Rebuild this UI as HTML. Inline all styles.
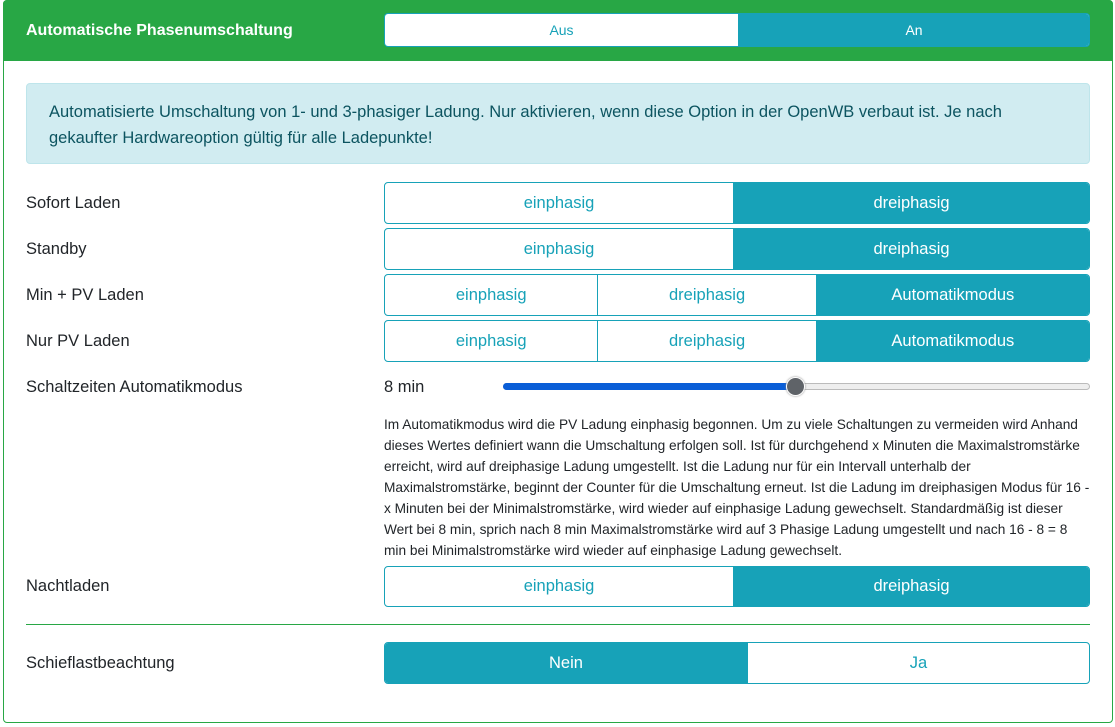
<!DOCTYPE html>
<html><head><meta charset="utf-8"><style>
*{box-sizing:border-box;margin:0;padding:0}
body{width:1115px;height:727px;background:#fff;font-family:"Liberation Sans",sans-serif;color:#212529;position:relative;overflow:hidden}
.card{position:absolute;left:3px;top:0;width:1110px;height:723px;border:1px solid #28a745;border-radius:4px}
.hdr{position:absolute;left:3px;top:0;width:1110px;height:61px;background:#28a745;border-radius:4px 4px 0 0}
.hdr .t{position:absolute;left:23px;top:22px;color:#fff;font-weight:bold;font-size:16px}
.grp{position:absolute;display:flex;border:1px solid #17a2b8;border-radius:4px;overflow:hidden}
.grp div{display:flex;align-items:center;justify-content:center;color:#17a2b8;font-size:16.5px;border-right:1px solid #17a2b8}
.grp div:last-child{border-right:none}
.grp div.a{background:#17a2b8;color:#fff}
.info{position:absolute;left:26px;top:83px;width:1064px;height:81px;background:#d1ecf1;border:1px solid #bee5eb;border-radius:4px;color:#0c5460;font-size:16.5px;line-height:26px;padding:15px 22px}
.lbl{position:absolute;left:26px;font-size:16.5px}
.help{position:absolute;left:384px;top:414px;width:706px;font-size:13.7px;line-height:21px}
</style></head><body>
<div class="card"></div>
<div class="hdr"><div class="t">Automatische Phasenumschaltung</div></div>
<div class="grp" style="left:384px;top:13px;width:706px;height:34px;background:#fff"><div style="width:355px;font-size:14px">Aus</div><div class="a" style="width:351px;font-size:14px">An</div></div>
<div class="info">Automatisierte Umschaltung von 1- und 3-phasiger Ladung. Nur aktivieren, wenn diese Option in der OpenWB verbaut ist. Je nach gekaufter Hardwareoption gültig für alle Ladepunkte!</div>

<div class="lbl" style="top:194px">Sofort Laden</div>
<div class="grp" style="left:384px;top:182px;width:706px;height:42px"><div style="width:350px">einphasig</div><div class="a" style="width:356px">dreiphasig</div></div>
<div class="lbl" style="top:240px">Standby</div>
<div class="grp" style="left:384px;top:228px;width:706px;height:42px"><div style="width:350px">einphasig</div><div class="a" style="width:356px">dreiphasig</div></div>
<div class="lbl" style="top:286px">Min + PV Laden</div>
<div class="grp" style="left:384px;top:274px;width:706px;height:42px"><div style="width:214px">einphasig</div><div style="width:219px">dreiphasig</div><div class="a" style="width:273px">Automatikmodus</div></div>
<div class="lbl" style="top:332px">Nur PV Laden</div>
<div class="grp" style="left:384px;top:320px;width:706px;height:42px"><div style="width:214px">einphasig</div><div style="width:219px">dreiphasig</div><div class="a" style="width:273px">Automatikmodus</div></div>
<div class="lbl" style="top:378px">Schaltzeiten Automatikmodus</div>
<div class="lbl" style="left:384px;top:378px">8 min</div>
<div style="position:absolute;left:503px;top:383px;width:587px;height:7px;border:1px solid #bbb;border-radius:4px;background:#eee"></div>
<div style="position:absolute;left:503px;top:383px;width:292px;height:7px;border-radius:4px;background:#0a5ed7"></div>
<div style="position:absolute;left:786px;top:377px;width:19px;height:19px;border-radius:50%;background:#5f6368;border:1px solid #fff;box-shadow:0 0 2px #888"></div>
<div class="help">Im Automatikmodus wird die PV Ladung einphasig begonnen. Um zu viele Schaltungen zu vermeiden wird Anhand dieses Wertes definiert wann die Umschaltung erfolgen soll. Ist für durchgehend x Minuten die Maximalstromstärke erreicht, wird auf dreiphasige Ladung umgestellt. Ist die Ladung nur für ein Intervall unterhalb der Maximalstromstärke, beginnt der Counter für die Umschaltung erneut. Ist die Ladung im dreiphasigen Modus für 16 - x Minuten bei der Minimalstromstärke, wird wieder auf einphasige Ladung gewechselt. Standardmäßig ist dieser Wert bei 8 min, sprich nach 8 min Maximalstromstärke wird auf 3 Phasige Ladung umgestellt und nach 16 - 8 = 8 min bei Minimalstromstärke wird wieder auf einphasige Ladung gewechselt.</div>
<div class="lbl" style="top:577px">Nachtladen</div>
<div class="grp" style="left:384px;top:566px;width:706px;height:41px"><div style="width:350px">einphasig</div><div class="a" style="width:356px">dreiphasig</div></div>
<div style="position:absolute;left:26px;top:624px;width:1064px;height:1px;background:#28a745"></div>
<div class="lbl" style="top:654px">Schieflastbeachtung</div>
<div class="grp" style="left:384px;top:642px;width:706px;height:42px"><div class="a" style="width:364px">Nein</div><div style="width:342px">Ja</div></div>
</body></html>
